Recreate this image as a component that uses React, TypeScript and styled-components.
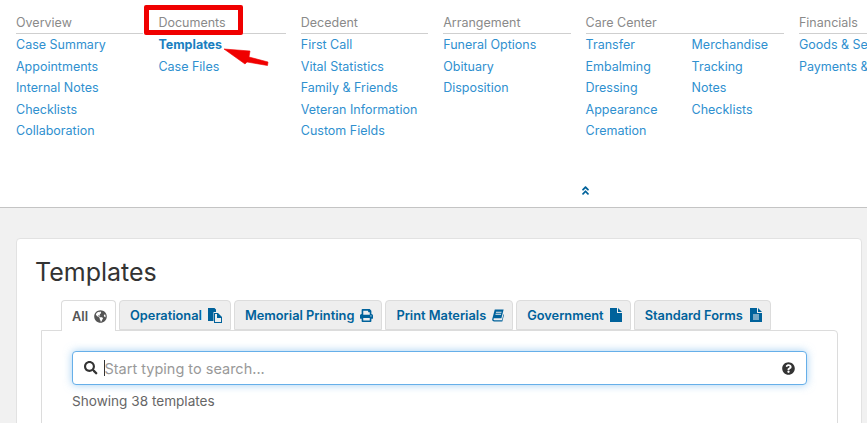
import React from 'react'
import styled, { createGlobalStyle } from 'styled-components'
import {
  FaAngleDoubleUp,
  FaGlobeAmericas,
  FaPrint,
  FaQuestionCircle,
  FaSearch,
} from 'react-icons/fa'

const linkBlue = '#2f90cf'
const tabBlue = '#00629b'

const GlobalStyle = createGlobalStyle`
  html, body {
    margin: 0;
    padding: 0;
    height: 423px;
    overflow: hidden;
    background: #f1f1f1;
    font-family: Inter, "Liberation Sans", sans-serif;
  }
`

const Page = styled.div`
  position: relative;
  width: 867px;
  height: 423px;
  overflow: hidden;
`

const TopNav = styled.nav`
  position: relative;
  height: 208px;
  box-sizing: border-box;
  padding: 14px 0 0 16px;
  background: #fff;
  border-bottom: 1px solid #c4c4c4;
  overflow: hidden;
`

const NavGrid = styled.div`
  display: flex;
  gap: 15px;
  width: 900px;
`

const NavColumn = styled.div<{ $wide?: boolean }>`
  flex: none;
  width: ${props => (props.$wide ? '198.4px' : '127.4px')};
`

const NavHeading = styled.div`
  height: 19px;
  line-height: 18px;
  font-size: 12.5px;
  color: #8a8a8a;
  border-bottom: 1px solid #cfcfcf;
  white-space: nowrap;
`

const NavLists = styled.div`
  display: flex;
`

const NavList = styled.div`
  flex: none;
  width: 106px;
  padding-top: 0.45px;
`

const NavLink = styled.div<{ $active?: boolean }>`
  height: 21.4px;
  line-height: 21.4px;
  font-size: 12.5px;
  font-weight: ${props => (props.$active ? 700 : 400)};
  color: ${props => (props.$active ? '#1a7fc0' : linkBlue)};
  white-space: nowrap;
`

const CollapseToggle = styled.div`
  display: flex;
  justify-content: center;
  position: absolute;
  left: 580px;
  top: 185px;
  color: ${tabBlue};
  font-size: 11px;
`

const Content = styled.main`
  padding: 30px 5px 0 16px;
`

const Card = styled.section`
  height: 220px;
  box-sizing: border-box;
  padding: 18px 23px 0 18px;
  background: #fff;
  border: 1px solid #e2e2e2;
  border-radius: 4px;
`

const Title = styled.h1`
  margin: 0 0 13px;
  font-size: 25px;
  line-height: 30px;
  font-weight: 400;
  color: #333;
`

const Tabs = styled.div`
  display: flex;
  gap: 3px;
  padding-left: 26px;
  position: relative;
  z-index: 1;
`

const Tab = styled.div<{ $active?: boolean }>`
  display: flex;
  align-items: center;
  gap: 6px;
  height: ${props => (props.$active ? '31px' : '30px')};
  margin-bottom: ${props => (props.$active ? '-1px' : '0')};
  box-sizing: border-box;
  padding: 0 8px 0 10px;
  font-size: 12.8px;
  font-weight: 600;
  white-space: nowrap;
  color: ${props => (props.$active ? '#555' : tabBlue)};
  background: ${props => (props.$active ? '#fff' : '#eeeeee')};
  border: 1px solid #dcdcdc;
  border-bottom: ${props => (props.$active ? 'none' : '1px solid #dcdcdc')};
  border-radius: 4px 4px 0 0;

  svg {
    font-size: 13px;
  }
`

const TabPanel = styled.div`
  height: 120px;
  box-sizing: border-box;
  margin-left: 6px;
  padding: 20px 30px 0 30px;
  background: #fff;
  border: 1px solid #dcdcdc;
  border-radius: 0 4px 0 0;
`

const SearchBox = styled.div`
  display: flex;
  align-items: center;
  height: 34px;
  box-sizing: border-box;
  padding: 0 11px;
  background: #fff;
  border: 1px solid #66afe9;
  border-radius: 4px;
  box-shadow: 0 0 8px rgba(102, 175, 233, 0.6);
  color: #333;
  font-size: 13px;
`

const SearchIcon = styled(FaSearch)`
  font-size: 13.5px;
`

const Caret = styled.span`
  width: 1px;
  height: 16px;
  margin: 0 0 0 6px;
  background: #333;
`

const Placeholder = styled.span`
  flex: 1;
  font-size: 14.5px;
  color: #999;
`

const ResultCount = styled.div`
  margin-top: 7px;
  font-size: 13.6px;
  line-height: 18px;
  color: #666;
`

const RedBox = styled.div`
  position: absolute;
  left: 144px;
  top: 5px;
  width: 99px;
  height: 30px;
  box-sizing: border-box;
  border: 5px solid #f00000;
  border-radius: 2px;
`

const Arrow = styled.svg`
  position: absolute;
  left: 222px;
  top: 46px;
`

const columns = [
  { heading: 'Overview', lists: [['Case Summary', 'Appointments', 'Internal Notes', 'Checklists', 'Collaboration']] },
  { heading: 'Documents', lists: [['Templates', 'Case Files']] },
  { heading: 'Decedent', lists: [['First Call', 'Vital Statistics', 'Family & Friends', 'Veteran Information', 'Custom Fields']] },
  { heading: 'Arrangement', lists: [['Funeral Options', 'Obituary', 'Disposition']] },
  {
    heading: 'Care Center',
    wide: true,
    lists: [
      ['Transfer', 'Embalming', 'Dressing', 'Appearance', 'Cremation'],
      ['Merchandise', 'Tracking', 'Notes', 'Checklists'],
    ],
  },
  { heading: 'Financials', lists: [['Goods & Services', 'Payments & Credits']] },
]

const CopyIcon = () => (
  <svg width="14" height="15" viewBox="0 0 14 15" fill="currentColor">
    <path d="M0 0h6.500l1.500 1.500V4H5.500v9H0z" />
    <path fillRule="evenodd" d="M6 5h4l4 4v6H6zM7 6v8h6V10H9V6z" />
  </svg>
)

const BookIcon = () => (
  <svg width="12" height="13" viewBox="0 0 13 13" fill="currentColor">
    <path fillRule="evenodd" d="M3 0h9.600l-2.400 9.600H2.600c-.7 0-1 .5-1 1s.4 1 1 1h8.200l1.600-6.500.6.500-1.800 7.400H2.400C1 13 0 12 .2 10.600zM4.400 2.400l-.2 1h6l.2-1zM3.900 4.600l-.2 1h6l.2-1z" />
  </svg>
)

const FileIcon = () => (
  <svg width="12" height="14" viewBox="0 0 12 14" fill="currentColor">
    <path d="M0 0h7v5h5v9H0z" />
    <path d="M8 0l4 4H8z" />
  </svg>
)

const FormIcon = () => (
  <svg width="13" height="14" viewBox="-1 0 13 14" fill="currentColor">
    <path fillRule="evenodd" d="M0 0h7v5h5v9H0zM3 6.500v1h6v-1zM3 8.500v1h6v-1zM3 10.500v1h6v-1z" />
    <path d="M8 0l4 4H8z" />
  </svg>
)

const tabs = [
  { label: 'Operational', icon: <CopyIcon /> },
  { label: 'Memorial Printing', icon: <FaPrint /> },
  { label: 'Print Materials', icon: <BookIcon /> },
  { label: 'Government', icon: <FileIcon /> },
  { label: 'Standard Forms', icon: <FormIcon /> },
]

export default function App() {
  return (
    <Page>
      <GlobalStyle />
      <TopNav>
        <NavGrid>
          {columns.map(column => (
            <NavColumn key={column.heading} $wide={column.wide}>
              <NavHeading>{column.heading}</NavHeading>
              <NavLists>
                {column.lists.map(list => (
                  <NavList key={list[0]}>
                    {list.map(item => (
                      <NavLink key={item} $active={item === 'Templates'}>{item}</NavLink>
                    ))}
                  </NavList>
                ))}
              </NavLists>
            </NavColumn>
          ))}
        </NavGrid>
        <CollapseToggle><FaAngleDoubleUp /></CollapseToggle>
      </TopNav>
      <Content>
        <Card>
          <Title>Templates</Title>
          <Tabs>
            <Tab $active>All <FaGlobeAmericas /></Tab>
            {tabs.map(tab => (
              <Tab key={tab.label}>{tab.label} {tab.icon}</Tab>
            ))}
          </Tabs>
          <TabPanel>
            <SearchBox>
              <SearchIcon />
              <Caret />
              <Placeholder>Start typing to search...</Placeholder>
              <FaQuestionCircle />
            </SearchBox>
            <ResultCount>Showing 38 templates</ResultCount>
          </TabPanel>
        </Card>
      </Content>
      <RedBox />
      <Arrow width="48" height="24" viewBox="0 0 48 24">
        <path d="M2 3 L28 5 L27 11 L46 16 L45.500 19.500 L25 16 L23 18 Z" fill="#f00000" stroke="#f00000" strokeWidth="0.6" strokeLinejoin="round" />
      </Arrow>
    </Page>
  )
}
